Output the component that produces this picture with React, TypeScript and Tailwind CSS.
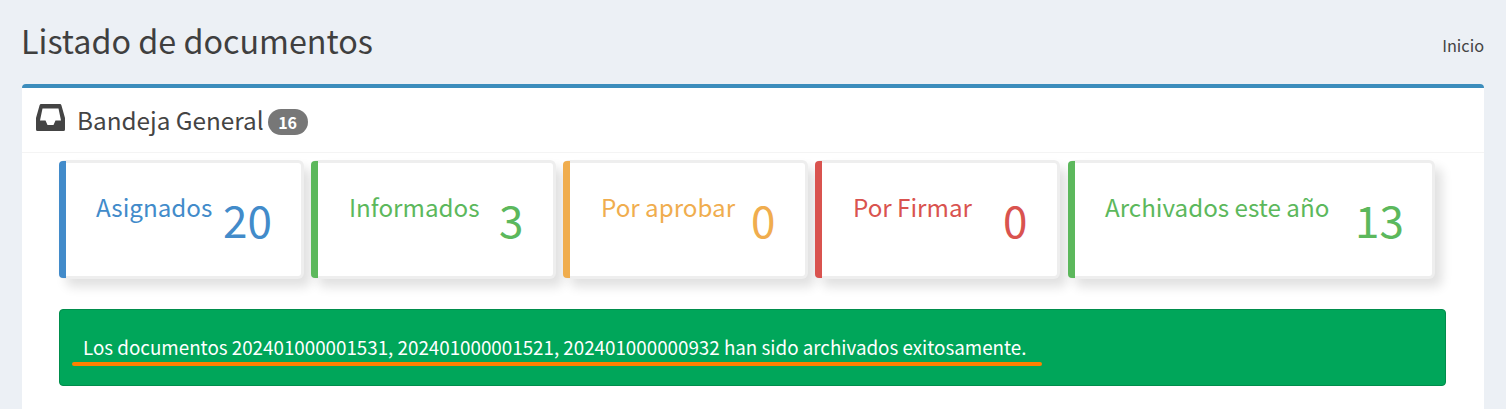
const font = { fontFamily: '"Noto Sans CJK SC", "Noto Sans", sans-serif' };

function Stat({ label, value, text, bar, width, labelW }: { label: string; value: string; text: string; bar: string; width: string; labelW: string }) {
  return (
    <div className={`${width} h-[119px] shrink-0 flex rounded-[6px] border-[3px] border-l-0 border-[#eeeeee] bg-white shadow-[7px_8px_11px_rgba(0,0,0,0.12)] relative`}>
      <div className={`${bar} w-[7px] -my-[2px] rounded-l-[4px] shrink-0`} />
      <div className={`flex-1 flex items-start ${text}`}>
        <div className={`${labelW} shrink-0 text-[24.2px] leading-[30px] mt-[29px]`}>{label}</div>
        <div className="text-[44px] leading-[56px] mt-[28px]">{value}</div>
      </div>
    </div>
  );
}

export default function App() {
  return (
    <div style={font} className="w-[1506px] h-[409px] overflow-hidden bg-[#ecf0f5] text-[#444444] px-[22px]">
      <div className="flex justify-between h-[84px]">
        <h1 className="text-[32.3px] leading-[40px] mt-[20px] -ml-px text-[#3f3f3f]">Listado de documentos</h1>
        <span className="text-[16.3px] leading-[20px] mt-[35px] text-[#444444]">Inicio</span>
      </div>
      <div className="bg-white h-[340px] rounded-t-[4px] border-t-4 border-[#3c8dbc]">
        <div className="h-[65px] border-b border-[#f4f4f4] flex items-center pl-[14px]">
          <svg viewBox="0 0 29 27" className="w-[29px] h-[27px] -mt-[6px] shrink-0" fill="#444444" fillRule="evenodd">
            <path d="M5 0H24Q25 0 25.4 1.2L29 14V25.5Q29 27 27.5 27H1.5Q0 27 0 25.5V14L3.6 1.2Q4 0 5 0ZM6.5 4.5H22.5L25 16.5H19.5L17.5 21H11.5L9.5 16.5H4Z" />
          </svg>
          <span className="ml-[12px] text-[24.3px] leading-[32px]">Bandeja General</span>
          <span className="ml-[4px] bg-[#777777] text-white text-[16px] font-bold leading-none rounded-[13px] w-[40px] h-[26px] flex items-center justify-center mt-[3px]">16</span>
        </div>
        <div className="pl-[37px] pt-[7px]">
          <div className="flex gap-[7px]">
            <Stat label="Asignados" value="20" text="text-[#428bca] pl-[30px]" bar="bg-[#428bca]" width="w-[245px]" labelW="w-[127px]" />
            <Stat label="Informados" value="3" text="text-[#5cb85c] pl-[31px]" bar="bg-[#5cb85c]" width="w-[245px]" labelW="w-[150px]" />
            <Stat label="Por aprobar" value="0" text="text-[#f0ad4e] pl-[31px]" bar="bg-[#f0ad4e]" width="w-[245px]" labelW="w-[150px]" />
            <Stat label="Por Firmar" value="0" text="text-[#d9534f] pl-[31px]" bar="bg-[#d9534f]" width="w-[245px]" labelW="w-[150px]" />
            <div className="ml-px">
              <Stat label="Archivados este año" value="13" text="text-[#5cb85c] pl-[30px]" bar="bg-[#5cb85c]" width="w-[367px]" labelW="w-[250px]" />
            </div>
          </div>
          <div className="relative mt-[30px] w-[1387px] h-[77px] bg-[#00a65a] border border-[#008d4c] rounded-[4px] text-white text-[18.8px] leading-[25px] pl-[23px] pt-[24px]">
            Los documentos 202401000001531, 202401000001521, 202401000000932 han sido archivados exitosamente.
            <div className="absolute left-[12px] top-[52px] w-[970px] h-[3.5px] rounded-full bg-[#ff8000]" />
          </div>
        </div>
      </div>
    </div>
  );
}
